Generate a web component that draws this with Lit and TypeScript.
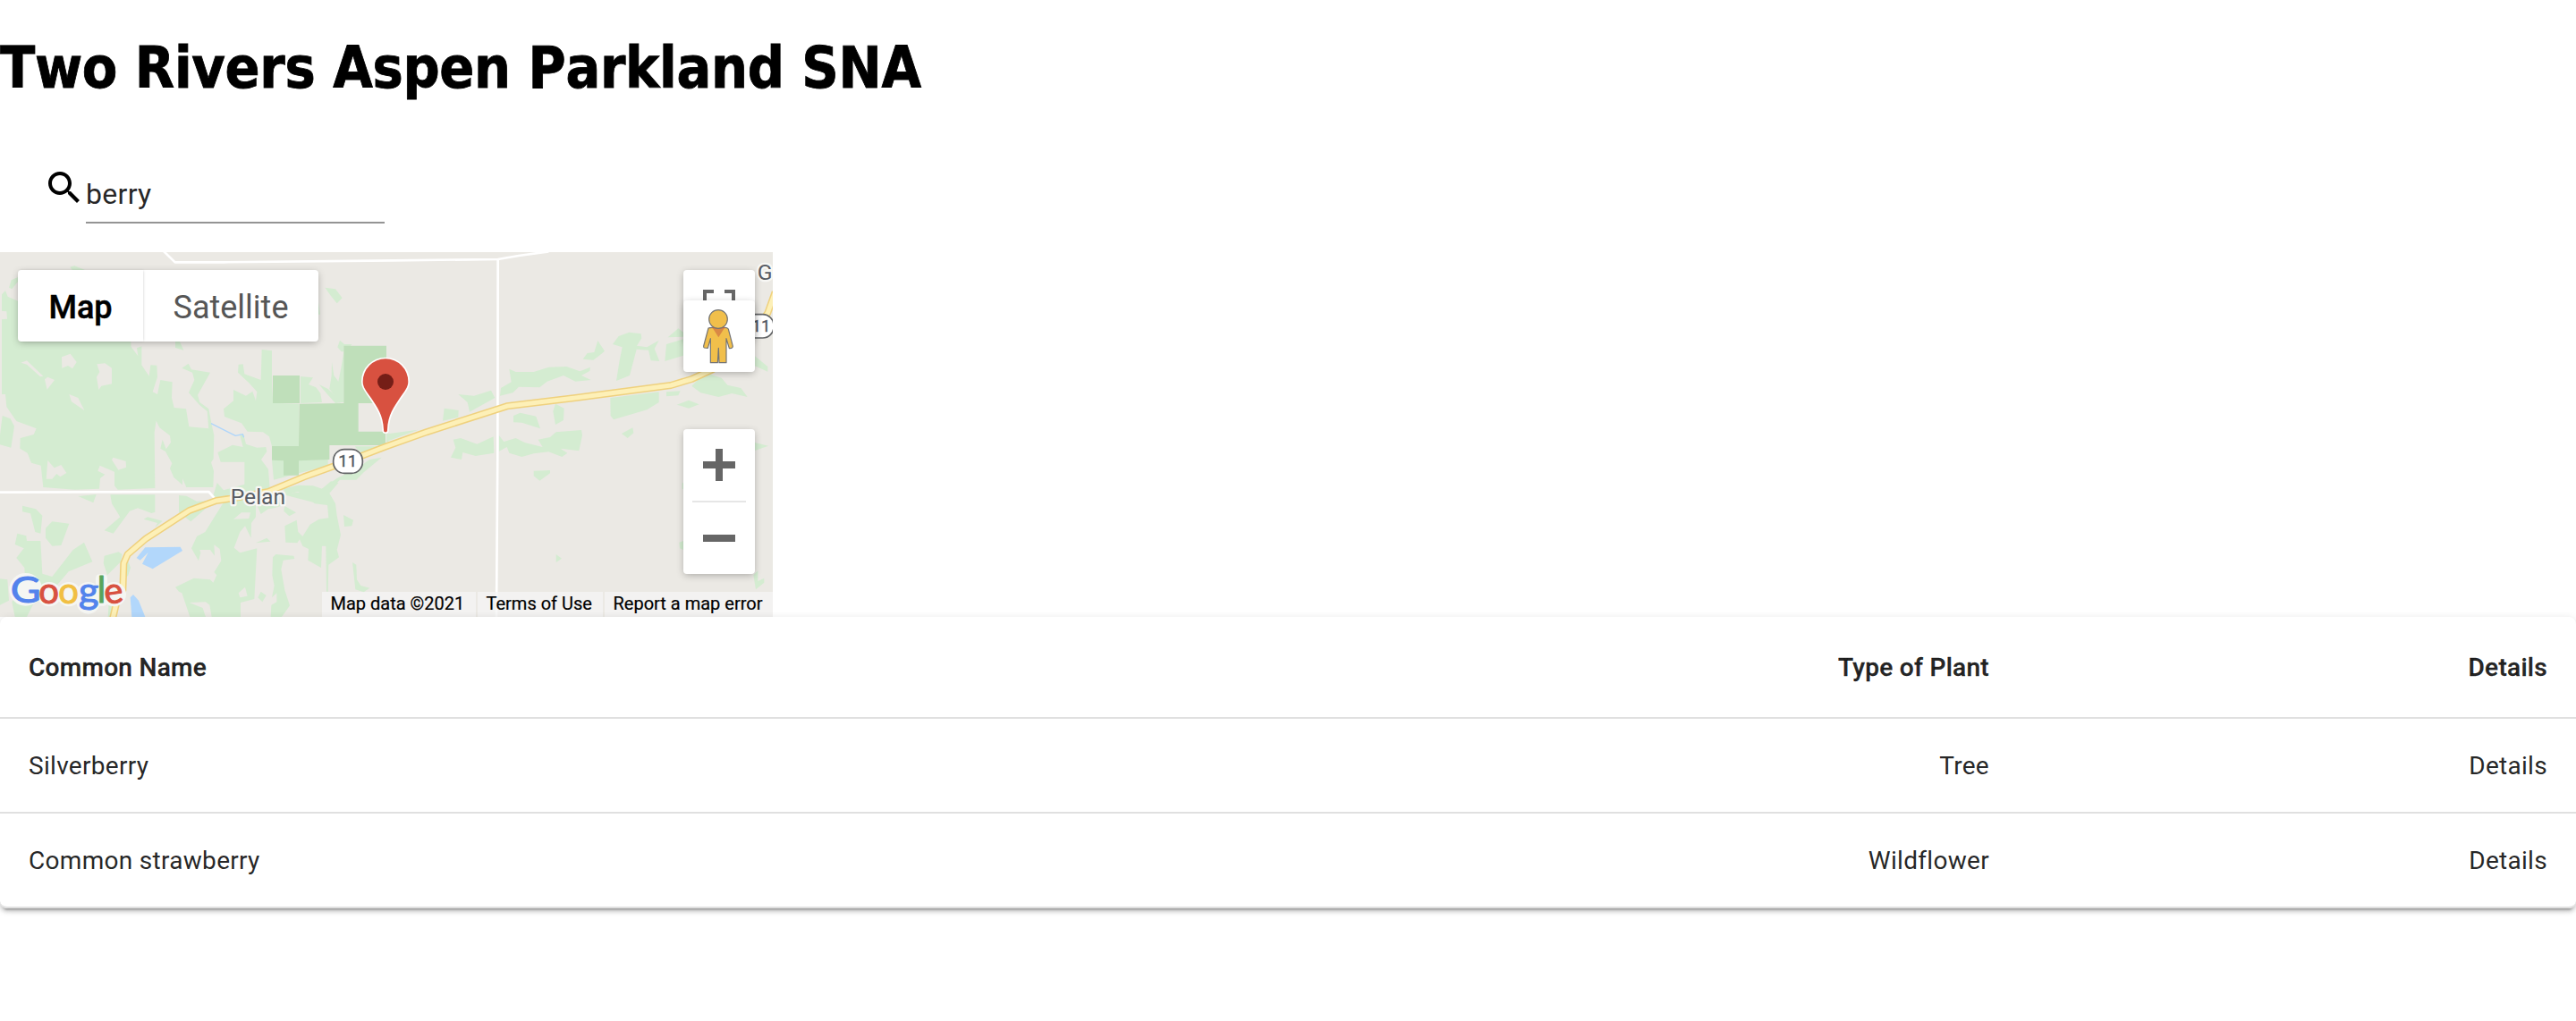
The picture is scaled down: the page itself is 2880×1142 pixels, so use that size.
import { LitElement, html, svg, css } from "lit";
import { customElement, property, state } from "lit/decorators.js";

/* Terrain is stored per sheet; each sheet has its own origin in map units (3 units = 1 px). */
interface Sheet {
  x: number;
  y: number;
  wood?: string[];
  clear?: string[];
  park?: string[];
  water?: string[];
}

const SHEETS: Sheet[] = [
  {
    x: 0, y: -36,
    wood: [
      "235,86 250,82 285,96 245,100",
      "30,155 38,130 60,120 60,135 40,160",
      "1090,155 1125,160 1148,190 1130,208 1110,183",
      "1068,205 1074,245 1068,245",
    ],
  },
  {
    x: 0, y: 294,
    wood: [
      "6,-152 18,-165 26,-145 60,-130 60,0 438,0 440,24 463,55 459,28 475,22 475,85 500,122 505,85 526,86 528,125 512,175 528,183 538,135 578,142 576,195 584,228 624,232 634,292 700,298 718,320 716,400 708,412 717,440 715,495 625,495 612,465 612,487 583,462 570,432 577,415 555,375 538,365 545,335 557,367 573,345 570,322 535,295 524,272 518,310 520,498 395,503 384,490 384,443 335,422 328,440 352,452 336,465 333,500 250,503 145,495 137,422 105,413 92,380 67,365 68,330 113,318 122,298 55,273 22,225 18,183 6,183",
      "8,255 35,265 48,290 37,362 0,352 0,320",
      "262,525 323,519 313,547",
      "588,0 600,0 616,35 588,27",
    ],
    clear: [
      "207,58 236,47 257,75 243,97 228,87 208,95",
      "70,77 90,70 145,122 135,124 90,83",
      "150,133 160,125 183,135 158,167",
      "325,82 352,79 375,95 375,148 340,155 331,168 324,125 334,108",
      "232,183 262,195 283,237 240,208",
      "160,405 182,430 205,420 223,447 202,460 190,450 175,467 155,467",
      "375,403 380,395 422,408 423,428 397,437",
      "0,-97 22,-95 24,-70 0,-68",
    ],
  },
  {
    x: 600, y: 264,
    wood: [
      "10,125 32,110 42,130 105,140 63,215 70,240 100,262 109,310 118,350 100,332 95,270 70,250 33,208 52,165 45,140",
      "278,63 312,67 312,180 316,242 402,245 402,387 312,387 303,355 282,340 230,338 210,310 153,288 150,262 183,235 183,198 225,218 247,203 258,235 262,205 235,175 198,140 200,113 215,112 220,145 275,165",
      "130,408 180,383 215,390 205,352 216,345 225,380 262,392 292,390 295,405 276,432 300,465 305,530 290,570 110,570 128,510 150,535 185,525 220,515 220,440 140,440",
      "312,434 500,432 500,452 318,500",
      "590,388 690,388 620,412 600,400",
      "345,548 420,540 450,545 480,530 530,495 600,460 640,432 680,425 620,475 595,500 540,500 500,540 500,575 450,575",
      "408,153 450,157 435,180 460,190 475,210 480,240 408,243",
      "470,180 500,195 550,240 525,243 500,215",
      "513,105 520,150 535,170 545,120 553,70 545,70 532,55 540,32 555,45 580,45 575,52 553,52 553,240 540,240 505,195 512,150",
      "696,345 720,345 720,358 696,376",
    ],
    park: [
      "315,150 405,150 405,243 315,243",
      "553,50 696,50 696,243 602,243 602,338 693,338 693,384 505,384 505,432 402,436 402,485 351,485 351,436 312,434 312,387 402,387 404,245 553,243",
    ],
  },
  {
    x: 0, y: 774,
    wood: [
      "370,40 520,40 520,98 508,102 462,85 435,95 380,170 350,160 403,115 375,70",
      "75,77 120,88 142,110 136,170 118,165 102,103 75,97",
      "153,152 175,130 232,137 205,210 175,212 153,185",
      "58,170 88,178 90,195 136,195 142,305 175,315 245,225 282,200 310,265 230,298 190,345 120,390 90,450 50,450 40,400 85,340 82,285 55,252 80,220 50,207",
      "0,322 25,325 30,395 0,410",
      "350,245 398,232 410,240 405,265 360,310 347,270",
      "425,250 438,285 430,310 422,320",
      "482,122 495,115 545,128 520,150 528,135",
      "600,42 625,44 660,62 720,60 640,130 600,100",
      "365,400 395,400 372,450 362,450",
    ],
    clear: ["163,285 185,250 202,265 175,302"],
    water: [
      "487,217 605,215 612,228 512,289 477,272 497,234 470,260 458,252",
      "437,385 447,375 465,395 487,450 442,450",
    ],
  },
  {
    x: 600, y: 774,
    wood: [
      "150,65 245,55 258,75 258,115 243,135 242,185 222,145 205,165 185,218 205,235 262,220 253,390 207,402 207,450 110,450 103,410 90,400 35,402 80,420 90,450 37,450 10,370 0,365 -12,350 50,320 105,325 115,335 127,310 118,300 142,262 137,222 118,208 120,245 105,225 70,225 73,235 66,262 42,220 60,180 88,165",
      "262,76 290,66 330,62 350,75 320,85 300,88 275,105",
      "355,78 393,100 370,112 352,95",
      "258,202 295,185 307,197",
      "355,145 395,125 400,165 415,180 440,140 470,122 502,118 498,75 455,70 430,45 400,30 360,40 350,20 400,8 450,10 480,20 510,-5 535,0 505,35 525,70 530,110 543,175 530,225 537,250 502,275 500,365 495,365 493,212 480,212 477,285 433,260 435,222 415,212 405,190 397,202 358,200",
      "552,108 585,125 580,145 555,147",
      "582,267 595,275 597,325 610,345 640,353 620,367 592,358",
      "315,250 325,240 385,245 388,255 350,260 343,290 355,360 372,412 345,450 308,450 310,410 328,400 328,370 312,385 320,345 313,310",
      "265,385 275,365 293,378 280,400",
    ],
    clear: ["183,122 210,100 240,100 235,120", "200,370 222,350 230,380 205,385"],
  },
  {
    x: 1290, y: -36,
    wood: [
      "247,513 300,518 357,500 370,525 285,572 278,540",
      "418,428 440,438 500,438 550,422 610,420 655,436 690,422 688,435 660,450 692,465 640,470 600,450 545,470 520,490 450,488 430,508 387,518 390,492 425,472",
      "200,560 248,567 247,590 195,602",
      "665,395 680,375 703,372 715,333 738,368 722,382 700,398",
      "765,345 785,318 820,305 860,310 862,325 846,350 880,355 920,332 905,360 922,402 893,400 885,365 845,362 822,450 777,468 788,400 797,355",
      "950,322 985,292 1002,305 1002,320",
      "945,345 1002,328 1002,383 940,402",
      "1030,485 1075,440 1130,458 1150,482 1195,492 1217,522 1165,510 1120,522 1060,508",
      "757,525 800,520 920,505 920,540 880,565 768,598 758,585",
      "945,505 992,502 985,517 945,520",
      "980,548 1020,533 1055,547 1020,560",
      "432,585 455,575 508,587 522,628 460,608 432,607",
      "565,570 573,545 602,560 600,600 573,615",
      "795,645 832,625 835,643 815,660",
      "230,665 255,660 310,680 365,655 367,710 305,720 262,708 258,732 222,725 238,692",
      "383,650 400,672 440,660 470,675 530,690 515,665 555,657 575,640 660,633 663,650 652,703 590,695 613,710 595,723 550,706 500,712 460,723 418,710 410,690 383,705",
      "500,770 555,768 555,778 520,803 500,787",
      "575,1050 594,1064 575,1077",
      "1242,675 1287,686 1242,702",
      "1242,385 1285,420 1285,437 1242,418",
      "1237,1120 1252,1105 1252,1140 1273,1130 1273,1145 1245,1168",
      "988,1010 1002,1005 1002,1035 990,1030",
      "998,812 1003,808 1003,832 998,830",
      "15,645 112,632 20,667",
    ],
  },
];

const HIGHWAY =
  "376,1275 390,1215 412,1170 415,1080 428,1050 490,997 635,903 725,870 780,862 900,840 1020,790 1165,738 1290,690 1430,640 1700,553 1930,525 2250,483 2320,462 2390,430 2500,350 2575,240 2600,170";

interface Plant {
  name: string;
  type: string;
}

@customElement("plant-map")
export class PlantMap extends LitElement {
  static styles = css`
    :host { display: block; position: relative; width: 864px; height: 408px; overflow: hidden; font-family: Roboto, "Liberation Sans", sans-serif; }
    .land { display: block; width: 864px; height: 408px; }
    .wood { fill: #d4ecd1; }
    .clear, .base { fill: #ebe9e4; }
    .park { fill: #bfdfba; }
    .water { fill: #b2d7fb; }
    .line { fill: none; stroke-linejoin: round; }
    .stream { stroke: #aed5fb; stroke-width: 4; }
    .minor { stroke: #fff; stroke-width: 8; }
    .major-edge { stroke: #efd17e; stroke-width: 24; }
    .major { stroke: #fdf0b7; stroke-width: 15; }
    .shield { fill: #fff; stroke: #636567; stroke-width: 5; }
    .label { font: 400 56px Roboto, sans-serif; fill: #515760; stroke: #515760; stroke-width: 1; text-anchor: middle; }
    .place { font: 400 74px Roboto, sans-serif; fill: #585c64; stroke: #f7f7f4; stroke-width: 14; stroke-linejoin: round; paint-order: stroke; }
    .brand { font: 400 120px "Lato", sans-serif; stroke-linejoin: round; }
    .halo { fill: #f5f6f3; stroke: #f5f6f3; stroke-width: 26; }
    .blue { fill: #5383ec; stroke: #5383ec; }
    .red { fill: #d85140; stroke: #d85140; }
    .yellow { fill: #f1bf42; stroke: #f1bf42; }
    .green { fill: #58a55c; stroke: #58a55c; }
    .inked { stroke-width: 3; }
    .panel { position: absolute; background: #fff; border-radius: 4px; box-shadow: 0 2px 8px -1px rgba(0, 0, 0, .3); }
    .types { left: 20px; top: 20px; display: flex; height: 80px; font-size: 36px; }
    .type { display: flex; align-items: center; justify-content: center; width: 196px; color: #565656; box-sizing: border-box; padding-top: 3px; }
    .type.on { width: 140px; color: #000; font-weight: 500; -webkit-text-stroke: .5px #000; box-shadow: 1px 0 3px -1px rgba(0, 0, 0, .2); }
    .full { left: 764px; top: 20px; width: 80px; height: 80px; }
    .person { left: 764px; top: 54px; width: 80px; height: 80px; }
    .zoom { left: 764px; top: 198px; width: 80px; height: 162px; }
    .glyph { display: block; width: 100%; height: 100%; }
    .legal { position: absolute; right: 0; bottom: 0; display: flex; gap: 2px; height: 28px; font-size: 20px; line-height: 27px; color: #000; white-space: nowrap; }
    .legal span { background: rgba(245, 245, 245, .72); box-sizing: border-box; padding-left: 9.5px; -webkit-text-stroke: .2px #000; }
    .w1 { width: 172px; } .w2 { width: 140px; } .w3 { width: 188px; }
  `;

  render() {
    const polys = (list: string[] | undefined, cls: string) =>
      (list ?? []).map((p) => svg`<polygon class=${cls} points=${p}></polygon>`);
    return html`
      <svg class="land" viewBox="0 0 2592 1224">
        <rect class="base" width="2592" height="1224"></rect>
        ${SHEETS.map((s) => svg`<g transform="translate(${s.x} ${s.y})">
          ${polys(s.wood, "wood")}${polys(s.clear, "clear")}${polys(s.park, "park")}${polys(s.water, "water")}
        </g>`)}
        <polyline class="line stream" points="708,575 790,616 814,611 818,622"></polyline>
        <g transform="translate(0 -36)">
          <polyline class="line minor" points="0,842 700,840 720,862"></polyline>
          <polyline class="line minor" points="548,32 587,70 750,70 1320,64 1670,60 1740,48 1840,34"></polyline>
          <polyline class="line minor" points="1670,60 1669,700 1665,1265"></polyline>
          <polyline class="line major-edge" points=${HIGHWAY}></polyline>
          <polyline class="line major" points=${HIGHWAY}></polyline>
          <rect class="shield" x="1118" y="698" width="98" height="80" rx="37"></rect>
          <text class="label" x="1166" y="757">11</text>
          <rect class="shield" x="2497" y="245" width="98" height="79" rx="37"></rect>
          <text class="label" x="2553" y="304">11</text>
          <text class="place" x="773" y="881">Pelan</text>
          <text class="place" x="2540" y="128">G</text>
          <g class="brand">
            <g class="halo">
              <circle cx="86" cy="1168" r="42"></circle><circle cx="165" cy="1184" r="28"></circle>
              <circle cx="231" cy="1184" r="28"></circle><circle cx="296" cy="1184" r="28"></circle>
              <circle cx="296" cy="1211" r="26"></circle><rect x="334" y="1130" width="13" height="80"></rect>
              <circle cx="382" cy="1184" r="28"></circle>
            </g>
            <g class="inked">
              <text class="blue" transform="translate(35 1213) scale(1.16 1)">G</text>
              <text class="red" x="130" y="1214">o</text>
              <text class="yellow" x="196" y="1214">o</text>
              <text class="blue" transform="translate(264 1214) scale(1.08 1)">g</text>
              <text class="green" x="326" y="1213">l</text>
              <text class="red" transform="translate(350 1214) rotate(-8 32 -28)">e</text>
            </g>
          </g>
          <path d="M1293 640c4 0 6-2 6-8 2-50 22-76 42-106 16-24 28-36 28-56a76 76 0 0 0-152 0c0 20 12 32 28 56 20 30 40 56 42 106 0 6 2 8 6 8z" fill="#d85140" stroke="#fff" stroke-width="10" paint-order="stroke"></path>
          <circle cx="1293" cy="471" r="27" fill="#751e17"></circle>
        </g>
      </svg>
      <div class="panel types"><div class="type on">Map</div><div class="type">Satellite</div></div>
      <div class="panel full">
        <svg class="glyph" viewBox="0 0 80 80"><path d="M22 36V22H34V26H26V36zM46 22H58V36H54V26H46z" fill="#666"></path></svg>
      </div>
      <div class="panel person">
        <svg class="glyph" viewBox="0 0 240 240" stroke="#737373" stroke-width="3.5" stroke-linejoin="round">
          <path d="M84 93Q88 91 98 91H138Q148 91 151 96L166 154Q166 158 162 160L154 161L144 128V209H120L118 160L115 209H91V128L82 160L70 159Q67 157 68 153Z" fill="#f1bf4b"></path>
          <path d="M98 92H138L118 124Z" fill="#d98845" stroke="none"></path>
          <path d="M97 92H139" stroke="#d2653a"></path>
          <circle cx="117" cy="63" r="31" fill="#f1bf4b"></circle>
        </svg>
      </div>
      <div class="panel zoom">
        <svg class="glyph" viewBox="0 0 80 162" fill="#666"><path d="M36 22h8v14h14v8H44v14h-8V44H22v-8h14zM22 118h36v8H22z"></path><path d="M10 80h60v2H10z" fill="#e6e6e6"></path></svg>
      </div>
      <div class="legal"><span class="w1">Map data ©2021</span><span class="w2">Terms of Use</span><span class="w3">Report a map error</span></div>
    `;
  }
}

@customElement("plant-table")
export class PlantTable extends LitElement {
  @property({ attribute: false }) plants: Plant[] = [];

  static styles = css`
    :host { display: block; position: relative; border-radius: 8px; background: #fff; color: rgba(0, 0, 0, .87); font: 400 28px/40px Roboto, "Liberation Sans", sans-serif; letter-spacing: .3px;
      box-shadow: 0 6px 2px -4px rgba(0, 0, 0, .2), 0 4px 4px 0 rgba(0, 0, 0, .14), 0 2px 10px 0 rgba(0, 0, 0, .12); }
    .row { display: grid; grid-template-columns: 1fr 700px 624px; padding: 33px 0 31px; border-bottom: 2px solid #e0e0e0; }
    .row:last-child { border-radius: 0 0 8px 8px; }
    .head { font-weight: 500; line-height: 48px; -webkit-text-stroke: .35px currentColor; }
    .cell { padding: 0 32px; }
    .end { text-align: right; }
  `;

  render() {
    return html`
      <div class="row head"><div class="cell">Common Name</div><div class="cell end">Type of Plant</div><div class="cell end">Details</div></div>
      ${this.plants.map((p) => html`<div class="row"><div class="cell">${p.name}</div><div class="cell end">${p.type}</div><div class="cell end">Details</div></div>`)}
    `;
  }
}

@customElement("app-root")
export class AppRoot extends LitElement {
  @state() private query = "berry";
  private plants: Plant[] = [
    { name: "Silverberry", type: "Tree" },
    { name: "Common strawberry", type: "Wildflower" },
  ];

  static styles = css`
    :host { display: block; min-height: 1142px; background: #fff; }
    .title { margin: 0; padding-top: 37px; height: 150px; box-sizing: border-box; font: 700 64px/78px "DejaVu Sans Condensed", "DejaVu Sans", sans-serif; font-stretch: condensed; letter-spacing: -.3px; font-kerning: none; -webkit-text-stroke: .8px #000; color: #000; white-space: nowrap; }
    .search { display: flex; align-items: flex-start; padding: 36px 0 0 48px; height: 132px; box-sizing: border-box; }
    .icon { width: 48px; height: 48px; display: block; }
    .field { width: 334px; height: 64px; box-sizing: border-box; padding: 13px 0 13px; border: 0; border-bottom: 2px solid #949494; outline: 0; background: none; color: rgba(0, 0, 0, .87); font: 400 32px/38px Roboto, "Liberation Sans", sans-serif; letter-spacing: .3px; }
  `;

  render() {
    const needle = this.query.toLowerCase();
    return html`
      <h1 class="title">Two Rivers Aspen Parkland SNA</h1>
      <div class="search">
        <svg class="icon" viewBox="0 0 24 24"><path d="M15.5 14h-.79l-.28-.27C15.41 12.59 16 11.11 16 9.5 16 5.91 13.09 3 9.5 3S3 5.91 3 9.5 5.91 16 9.5 16c1.61 0 3.09-.59 4.23-1.57l.27.28v.79l5 4.99L20.49 19l-4.99-5zm-6 0C7.01 14 5 11.99 5 9.5S7.01 5 9.5 5 14 7.01 14 9.5 11.99 14 9.5 14z"></path></svg>
        <input class="field" .value=${this.query} @input=${(e: Event) => (this.query = (e.target as HTMLInputElement).value)} />
      </div>
      <plant-map></plant-map>
      <plant-table .plants=${this.plants.filter((p) => p.name.toLowerCase().includes(needle))}></plant-table>
    `;
  }
}
